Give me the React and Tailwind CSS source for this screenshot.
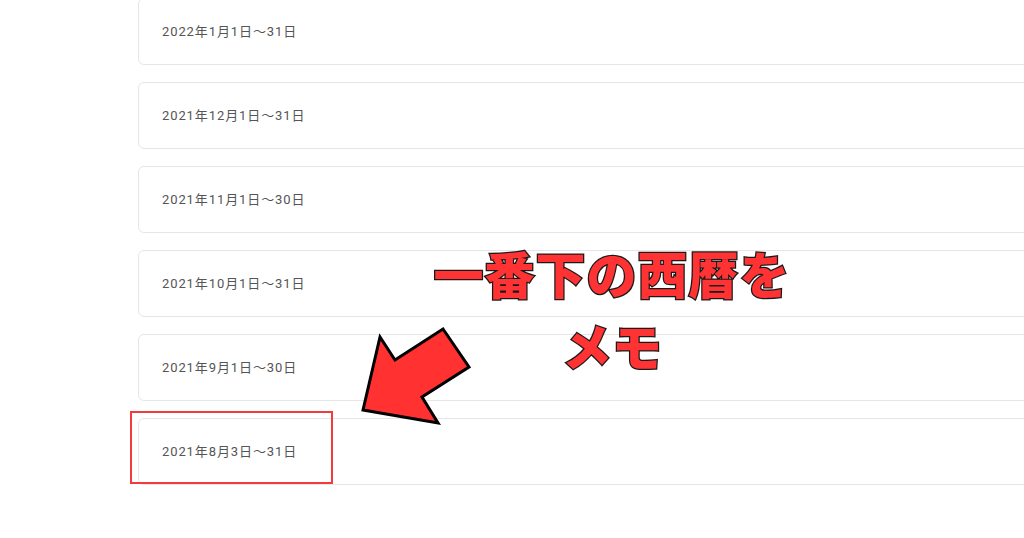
import React from 'react';

const months = [
  '2022年1月1日〜31日',
  '2021年12月1日〜31日',
  '2021年11月1日〜30日',
  '2021年10月1日〜31日',
  '2021年9月1日〜30日',
  '2021年8月3日〜31日',
];

export default function App() {
  return (
    <div className="relative w-[1024px] h-[538px] overflow-hidden bg-white" style={{ fontFamily: '"Noto Sans CJK JP", "Noto Sans", sans-serif' }}>
      {/* month list */}
      <div className="flex flex-col gap-[17px] pl-[138px] -mt-[2px] w-[1060px]">
        {months.map((m) => (
          <div key={m} className="h-[67px] flex items-center pl-[23px] border border-[#e6e6e6] rounded-[6px] bg-white">
            <span className="text-[13px] tracking-[0.9px] text-[#555]" style={{ fontFamily: 'Roboto, "Noto Sans CJK JP", sans-serif' }}>{m}</span>
          </div>
        ))}
      </div>

      {/* highlight around the last row */}
      <div className="absolute left-[130px] top-[411px] w-[203px] h-[73px] border-[2.5px] border-[#f03c3c]" />

      {/* arrow */}
      <svg className="absolute left-0 top-0" width="1024" height="538" viewBox="0 0 1024 538">
        <polygon
          points="363,410 380,337 395,360 443,329 469,367 422,397 438,423"
          fill="#ff3131"
          stroke="#000"
          strokeWidth="3"
          strokeLinejoin="miter"
        />
      </svg>

      {/* caption */}
      <div className="absolute left-[412px] top-[236px] w-[400px] text-center text-[50px] leading-[72px] font-black text-[#ff3333] [-webkit-text-stroke:2.5px_#1a1a1a] [paint-order:stroke_fill]">
        <div className="tracking-[1px]">一番下の西暦を</div>
        <div>メモ</div>
      </div>
    </div>
  );
}
